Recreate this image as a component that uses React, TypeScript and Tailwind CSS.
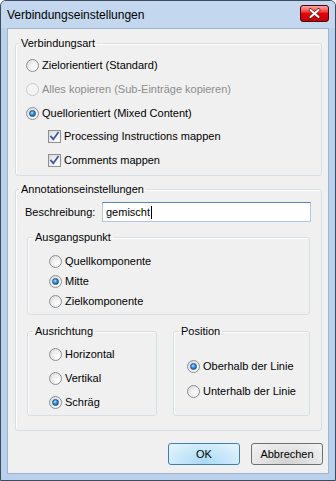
import React from "react";

function Radio({ checked = false, disabled = false }: { checked?: boolean; disabled?: boolean }) {
  return (
    <span
      className={
        "relative flex h-[13px] w-[13px] shrink-0 items-center justify-center rounded-full border " +
        (disabled
          ? "border-[#c9c9c9] bg-[#f4f4f4]"
          : "border-[#8c8f94] bg-[radial-gradient(circle_at_70%_70%,#ffffff_0%,#eeeeee_50%,#d0d0d0_100%)]")
      }
    >
      {checked && (
        <span className="h-[7px] w-[7px] rounded-full border border-[#1c4c86] bg-[radial-gradient(circle_at_40%_35%,#a6e4ff_0%,#2f95e0_45%,#0d4690_100%)]" />
      )}
    </span>
  );
}

function Check() {
  return (
    <span className="flex h-[13px] w-[13px] shrink-0 items-center justify-center border border-[#8c8f94] bg-[radial-gradient(circle_at_75%_75%,#ffffff_0%,#f0f0f0_50%,#d6d6d6_100%)]">
      <svg width="11" height="11" viewBox="0 0 11 11">
        <path d="M2 5.5 L4.3 8.2 L9 1.8" fill="none" stroke="#3e5aa6" strokeWidth="1.8" strokeLinecap="square" />
      </svg>
    </span>
  );
}

function Legend({ children, ml = "ml-[3px]" }: { children: React.ReactNode; ml?: string }) {
  return <legend className={"px-[2px] leading-[13px] " + ml}>{children}</legend>;
}

function CloseButton() {
  return (
    <span className="mt-[4px] flex h-[17px] w-[29px] items-center justify-center rounded-[3px] border border-red-950 bg-red-700 bg-linear-to-b from-red-300 via-red-600 to-red-700">
      <svg width="13" height="11" viewBox="0 0 13 11">
        <path d="M2.5 2 L10.5 9 M10.5 2 L2.5 9" stroke="#6a2a22" strokeWidth="3.6" strokeLinecap="round" />
        <path d="M2.5 2 L10.5 9 M10.5 2 L2.5 9" stroke="#ffffff" strokeWidth="2" strokeLinecap="round" />
      </svg>
    </span>
  );
}

export default function App() {
  return (
    <div className="flex h-[481px] w-[336px] flex-col overflow-hidden rounded-t-[6px] border border-[#3d4b5e] bg-[#b9d1ea] font-['Liberation_Sans',Arial,sans-serif] text-[11px] text-black">
      <div className="flex h-[27px] shrink-0 items-start justify-between bg-[#c3d7ee] pl-[6px] pr-[6px]">
        <span className="mt-[6px] text-[12px] leading-[16px]">Verbindungseinstellungen</span>
        <CloseButton />
      </div>

      <div className="mx-[6px] mb-[6px] flex flex-1 flex-col border border-[#9fb4cc] bg-[#f0f0f0]">
        <fieldset className="ml-[7px] mt-[8px] w-[307px] rounded-[3px] border border-[#d5dfe5] shadow-[inset_1px_1px_0_#fff]">
          <Legend>Verbindungsart</Legend>
          <div className="flex flex-col pb-[3px] pl-[10px] pt-[3px]">
            <div className="flex h-[24px] items-center gap-[3px]">
              <Radio />
              <span>Zielorientiert (Standard)</span>
            </div>
            <div className="flex h-[24px] items-center gap-[3px]">
              <Radio disabled />
              <span className="text-[#8d8d8d]">Alles kopieren (Sub-Einträge kopieren)</span>
            </div>
            <div className="flex h-[24px] items-center gap-[3px]">
              <Radio checked />
              <span>Quellorientiert (Mixed Content)</span>
            </div>
            <div className="flex h-[23px] items-center gap-[3px] pl-[22px]">
              <Check />
              <span>Processing Instructions mappen</span>
            </div>
            <div className="flex h-[24px] items-center gap-[3px] pl-[22px]">
              <Check />
              <span>Comments mappen</span>
            </div>
          </div>
        </fieldset>

        <fieldset className="ml-[7px] mt-[7px] w-[307px] rounded-[3px] border border-[#d5dfe5] shadow-[inset_1px_1px_0_#fff]">
          <Legend>Annotationseinstellungen</Legend>
          <div className="flex flex-col pb-[14px] pl-[9px] pt-[6px]">
            <div className="flex h-[20px] items-center">
              <span className="w-[77px]">Beschreibung:</span>
              <div className="flex h-[20px] w-[209px] items-center border border-[#aec9e4] border-t-[#5a86ba] bg-white pl-[3px]">
                <span>gemischt</span>
                <span className="ml-[1px] h-[13px] w-px bg-black" />
              </div>
            </div>

            <fieldset className="ml-[2px] mt-[9px] w-[283px] rounded-[3px] border border-[#d5dfe5] shadow-[inset_1px_1px_0_#fff]">
              <Legend ml="ml-[5px]">Ausgangspunkt</Legend>
              <div className="flex flex-col pb-[3px] pl-[21px] pt-[7px]">
                <div className="flex h-[20px] items-center gap-[3px]">
                  <Radio />
                  <span>Quellkomponente</span>
                </div>
                <div className="flex h-[20px] items-center gap-[3px]">
                  <Radio checked />
                  <span>Mitte</span>
                </div>
                <div className="flex h-[20px] items-center gap-[3px]">
                  <Radio />
                  <span>Zielkomponente</span>
                </div>
              </div>
            </fieldset>

            <div className="ml-[2px] mt-[10px] flex gap-[16px]">
              <fieldset className="w-[130px] rounded-[3px] border border-[#d5dfe5] shadow-[inset_1px_1px_0_#fff]">
                <Legend ml="ml-[5px]">Ausrichtung</Legend>
                <div className="flex flex-col pb-[1px] pl-[21px] pt-[4px]">
                  <div className="flex h-[24px] items-center gap-[3px]">
                    <Radio />
                    <span>Horizontal</span>
                  </div>
                  <div className="flex h-[24px] items-center gap-[3px]">
                    <Radio />
                    <span>Vertikal</span>
                  </div>
                  <div className="flex h-[24px] items-center gap-[3px]">
                    <Radio checked />
                    <span>Schräg</span>
                  </div>
                </div>
              </fieldset>
              <fieldset className="w-[137px] rounded-[3px] border border-[#d5dfe5] shadow-[inset_1px_1px_0_#fff]">
                <Legend ml="ml-[5px]">Position</Legend>
                <div className="flex flex-col pl-[13px] pt-[16px]">
                  <div className="flex h-[25px] items-center gap-[3px]">
                    <Radio checked />
                    <span>Oberhalb der Linie</span>
                  </div>
                  <div className="flex h-[25px] items-center gap-[3px]">
                    <Radio />
                    <span>Unterhalb der Linie</span>
                  </div>
                </div>
              </fieldset>
            </div>
          </div>
        </fieldset>

        <div className="mr-[5px] mt-[12px] flex justify-end gap-[11px]">
          <button className="flex h-[22px] w-[72px] items-center justify-center rounded-[3px] border border-[#3c7fb1] bg-[radial-gradient(ellipse_at_50%_100%,#a7d9f5_0%,#cdeafb_60%,#e8f5fd_100%)]">
            OK
          </button>
          <button className="flex h-[22px] w-[72px] items-center justify-center rounded-[3px] border border-[#707070] bg-[radial-gradient(ellipse_at_50%_100%,#d2d2d2_0%,#e6e6e6_60%,#f3f3f3_100%)]">
            Abbrechen
          </button>
        </div>
      </div>
    </div>
  );
}
